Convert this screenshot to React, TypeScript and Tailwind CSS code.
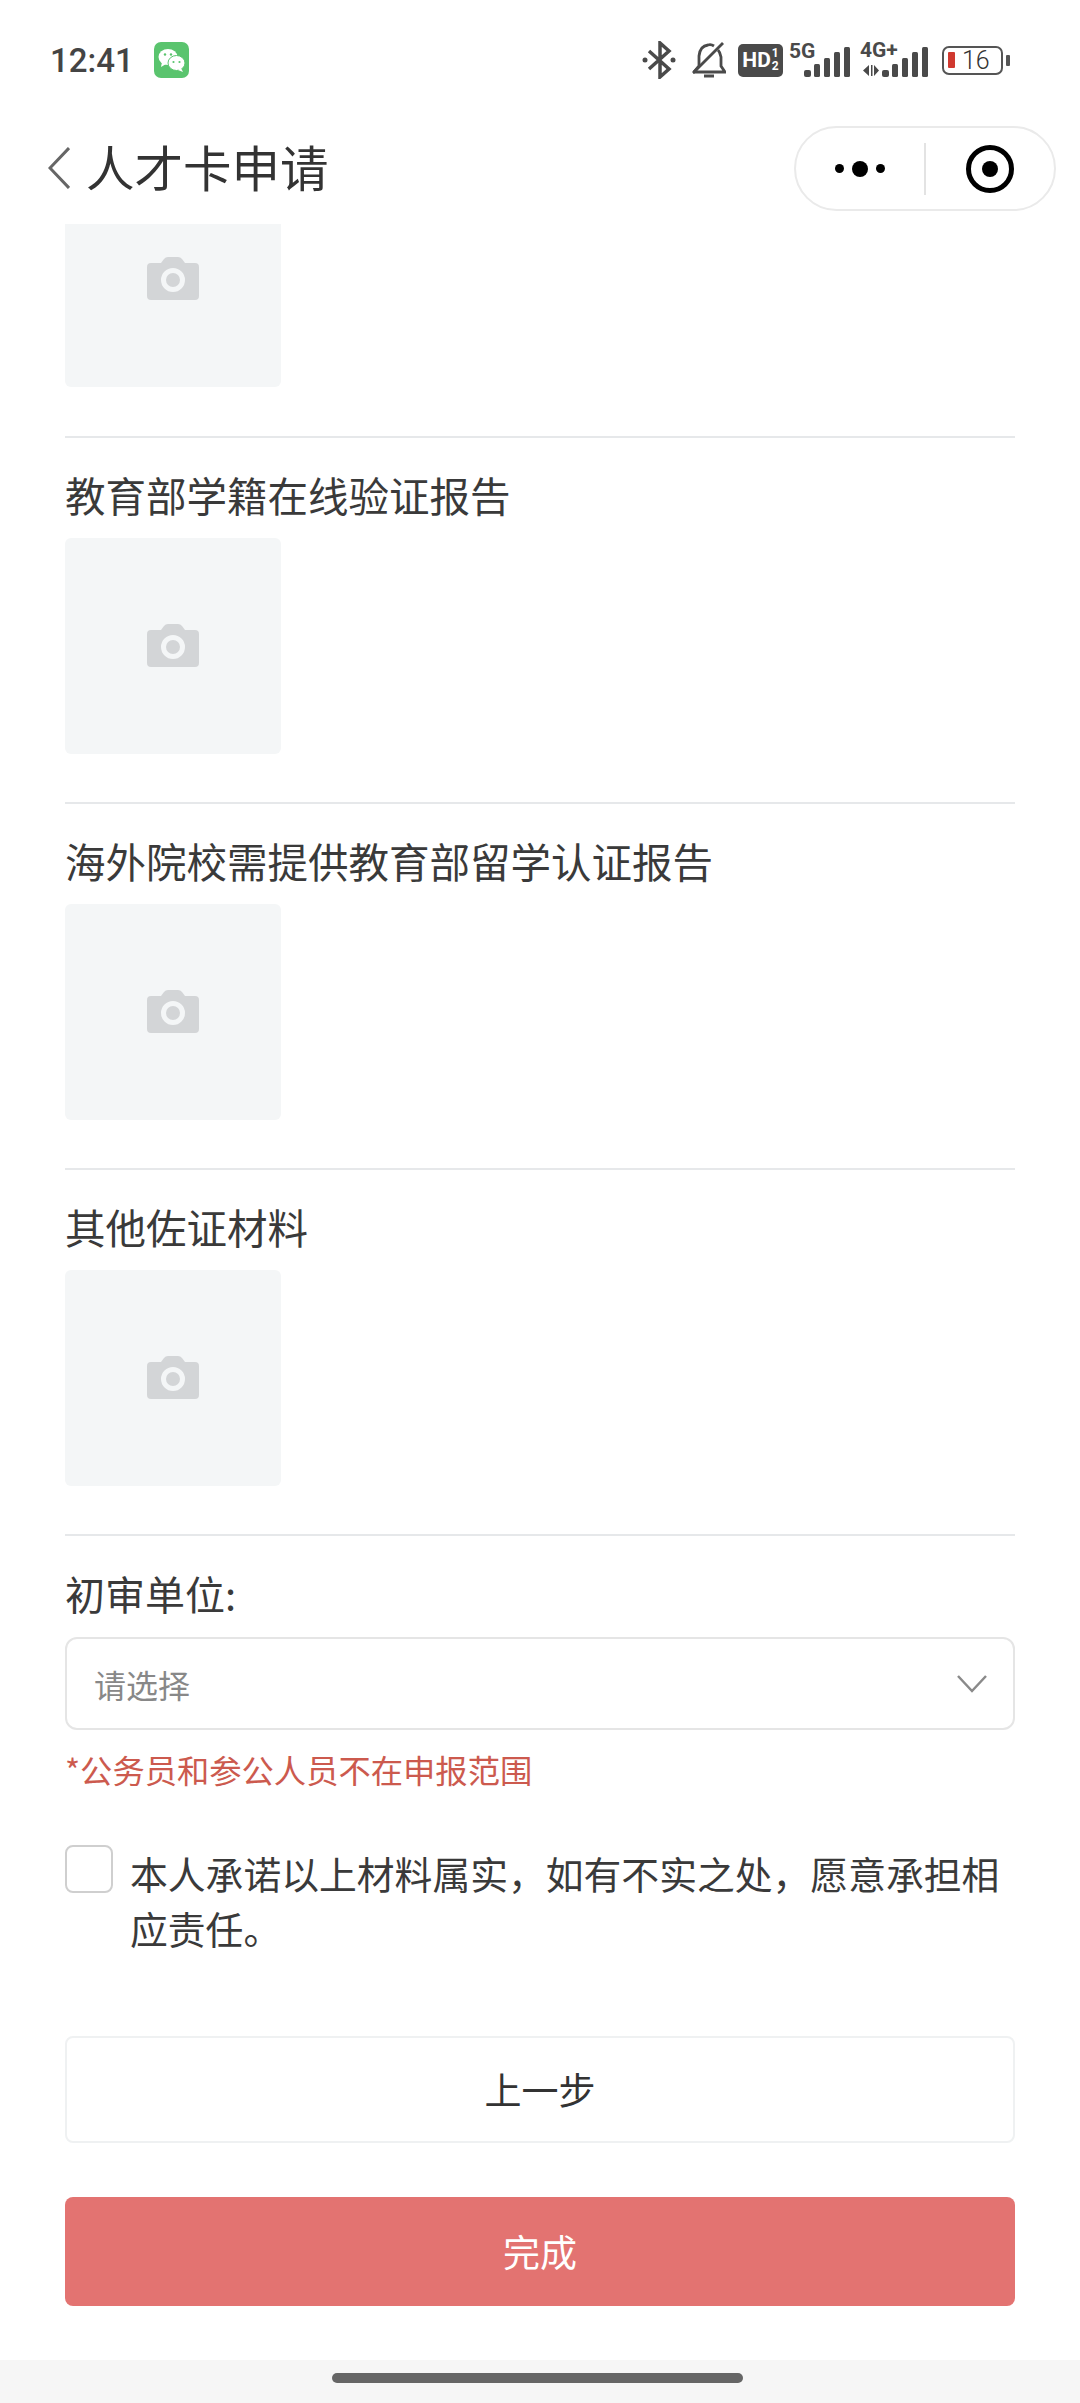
import React from "react";

const materials = ["教育部学籍在线验证报告", "海外院校需提供教育部留学认证报告", "其他佐证材料"];

function CameraIcon() {
  return (
    <svg width="52" height="44" viewBox="0 0 52 44">
      <path
        d="M4 6h10l3-4q1.500-2 4-2h10q2.500 0 4 2l3 4h10q4 0 4 4v29q0 4-4 4H4q-4 0-4-4V10q0-4 4-4z"
        fill="#d3d5d7"
      />
      <circle cx="26" cy="23" r="9.500" fill="none" stroke="#f4f6f7" strokeWidth="5" />
    </svg>
  );
}

function Uploader({ clipped }: { clipped?: boolean }) {
  return (
    <div
      className={`w-[216px] h-[216px] rounded-md bg-[#f4f6f7] flex items-center justify-center ${clipped ? "-mt-[53px]" : ""}`}
    >
      <CameraIcon />
    </div>
  );
}

function WeChatIcon() {
  return (
    <svg width="35" height="36" viewBox="0 0 35 36">
      <rect width="35" height="36" rx="7" fill="#5ac46e" />
      <ellipse cx="14" cy="15" rx="9.500" ry="8" fill="#fff" />
      <path d="M8 20l-1 5 5-3z" fill="#fff" />
      <ellipse cx="22.500" cy="21" rx="8.500" ry="7.500" fill="#fff" stroke="#5ac46e" strokeWidth="1" />
      <path d="M27 26l2 4-5-2z" fill="#fff" />
      <circle cx="11" cy="12.500" r="1.200" fill="#5ac46e" />
      <circle cx="17" cy="12.500" r="1.200" fill="#5ac46e" />
      <circle cx="19.500" cy="20" r="1.100" fill="#5ac46e" />
      <circle cx="25.500" cy="20" r="1.100" fill="#5ac46e" />
    </svg>
  );
}

function Signal() {
  return (
    <svg width="46" height="30" viewBox="0 0 46 30" fill="#4a4a4a">
      <rect x="0" y="23" width="7" height="7" rx="2" />
      <rect x="10" y="17" width="6" height="13" rx="1.500" />
      <rect x="20" y="11" width="6" height="19" rx="1.500" />
      <rect x="30" y="5" width="6" height="25" rx="1.500" />
      <rect x="40" y="0" width="6" height="30" rx="1.500" />
    </svg>
  );
}

function StatusIcons() {
  return (
    <div className="flex items-center text-[#4a4a4a]">
      <svg width="34" height="38" viewBox="0 0 34 38" fill="none" stroke="#4a4a4a" strokeWidth="3.500">
        <path d="M7 10l20 18-9 8V2l9 8L7 28" />
        <circle cx="3" cy="19" r="2.500" fill="#4a4a4a" stroke="none" />
        <circle cx="31" cy="19" r="2.500" fill="#4a4a4a" stroke="none" />
      </svg>
      <svg className="ml-[16px]" width="34" height="36" viewBox="0 0 34 36" fill="none" stroke="#4a4a4a" strokeWidth="2.800">
        <path d="M1 30h32l-4-6V15q-1-5-3-7M22 4q-3-2-6-1-8 1-9 11v10l-5 6" />
        <path d="M1 31L31 1" />
        <path d="M12 34h10" strokeWidth="3" />
      </svg>
      <div className="ml-[12px] w-[45px] h-[33px] rounded-[5px] bg-[#4a4a4a] text-white flex items-center justify-center gap-[1px] font-['Roboto',sans-serif] font-bold">
        <span className="text-[21px] leading-none">HD</span>
        <span className="flex flex-col text-[12px] leading-[13px] text-center">
          <span>1</span>
          <span>2</span>
        </span>
      </div>
      <div className="relative ml-[6px] w-[61px] h-[34px]">
        <span className="absolute left-0 -top-[2px] text-[21px] leading-none font-bold font-['Roboto',sans-serif]">5G</span>
        <div className="absolute right-0 bottom-0 flex">
          <Signal />
        </div>
      </div>
      <div className="relative ml-[10px] w-[68px] h-[34px]">
        <span className="absolute left-0 -top-[3px] text-[21px] leading-none font-bold font-['Roboto',sans-serif]">4G+</span>
        <svg className="absolute left-[3px] bottom-[1px]" width="16" height="11" viewBox="0 0 16 11" fill="#4a4a4a">
          <path d="M6 0v11L0 5.500zM8 0l1.500 0v11H8zM11 0l5 5.500-5 5.500z" />
        </svg>
        <div className="absolute right-0 bottom-0 flex">
          <Signal />
        </div>
      </div>
      <div className="ml-[14px] flex items-center gap-[3px]">
        <div className="w-[61px] h-[29px] rounded-[7px] border-[2.5px] border-[#555] flex items-center pl-[4px] gap-[7px]">
          <div className="w-[7px] h-[16px] rounded-[1px] bg-[#d0392f]" />
          <span className="text-[25px] leading-none font-['Roboto',sans-serif] font-light text-[#333]">16</span>
        </div>
        <div className="w-[4px] h-[11px] rounded-[1px] bg-[#555]" />
      </div>
    </div>
  );
}

export default function App() {
  return (
    <div className="w-[1080px] h-[2403px] bg-white flex flex-col overflow-hidden font-['Noto_Sans_CJK_SC','Noto_Sans',sans-serif] text-[#333]">
      {/* status bar */}
      <div className="h-[120px] shrink-0 flex items-center justify-between pl-[50px] pr-[70px]">
        <div className="flex items-center gap-[20px]">
          <span className="text-[33px] leading-none font-medium text-[#444] font-['Roboto',sans-serif]">12:41</span>
          <WeChatIcon />
        </div>
        <StatusIcons />
      </div>

      {/* nav */}
      <div className="h-[104px] shrink-0 flex items-center justify-between pl-[48px] pr-[24px] pb-[7px]">
        <div className="flex items-center gap-[16px]">
          <svg className="-mt-[2px]" width="22" height="42" viewBox="0 0 22 42" fill="none" stroke="#666" strokeWidth="3">
            <path d="M21 1L2 21l19 20" />
          </svg>
          <span className="-mt-[5px] text-[48.500px] leading-none text-[#333]">人才卡申请</span>
        </div>
        <div className="w-[262px] h-[85px] rounded-full border-2 border-[#eaeaea] flex items-center">
          <div className="w-[128px] flex items-center justify-center gap-[8px]">
            <div className="w-[9px] h-[9px] rounded-full bg-black" />
            <div className="w-[16px] h-[16px] rounded-full bg-black" />
            <div className="w-[9px] h-[9px] rounded-full bg-black" />
          </div>
          <div className="w-[2px] h-[52px] bg-[#e3e3e3]" />
          <div className="flex-1 flex items-center justify-center">
            <div className="w-[48px] h-[48px] rounded-full border-[5px] border-black flex items-center justify-center">
              <div className="w-[16px] h-[16px] rounded-full bg-black" />
            </div>
          </div>
        </div>
      </div>

      {/* form */}
      <div className="flex-1 overflow-hidden px-[65px]">
        <div className="overflow-hidden pb-[49px] border-b-2 border-[#e6e8ea]">
          <Uploader clipped />
        </div>
        {materials.map((title) => (
          <div key={title} className="pt-[27px] pb-[48px] border-b-2 border-[#e6e8ea]">
            <div className="h-[60px] mb-[13px] text-[40.500px] leading-[60px] text-[#3a3a3a] whitespace-nowrap">{title}</div>
            <Uploader />
          </div>
        ))}

        <div className="pt-[27px] h-[60px] box-content text-[40px] leading-[60px] text-[#3a3a3a]">初审单位:</div>
        <div className="mt-[14px] h-[93px] rounded-[12px] border-2 border-[#e5e5e5] flex items-center justify-between pl-[27px] pr-[26px]">
          <span className="text-[32px] leading-none text-[#888]">请选择</span>
          <svg width="30" height="18" viewBox="0 0 30 18" fill="none" stroke="#8a8a8a" strokeWidth="2.500">
            <path d="M1 1l14 15L29 1" />
          </svg>
        </div>
        <div className="mt-[15px] h-[48px] text-[32.300px] leading-[48px] text-[#cc5a4e] whitespace-nowrap">*公务员和参公人员不在申报范围</div>

        <div className="mt-[52px] flex items-start gap-[17px]">
          <div className="shrink-0 w-[48px] h-[48px] rounded-[8px] border-2 border-[#cfcfcf]" />
          <p className="text-[37.800px] leading-[55px] text-[#3a3a3a]">{"本人承诺以上材料属实\uFF0C如有不实之处\uFF0C愿意承担相应责任\u3002"}</p>
        </div>

        <button className="mt-[81px] w-full h-[107px] rounded-[8px] border-2 border-[#eff1f2] bg-white text-[37px] text-[#333]">
          上一步
        </button>
        <button className="mt-[54px] w-full h-[109px] rounded-[8px] bg-[#e37371] text-[37px] text-white">完成</button>
      </div>

      {/* home indicator */}
      <div className="h-[43px] shrink-0 bg-[#f6f6f6] flex justify-center pt-[13px] pr-[6px]">
        <div className="w-[411px] h-[10px] rounded-full bg-[#666]" />
      </div>
    </div>
  );
}
